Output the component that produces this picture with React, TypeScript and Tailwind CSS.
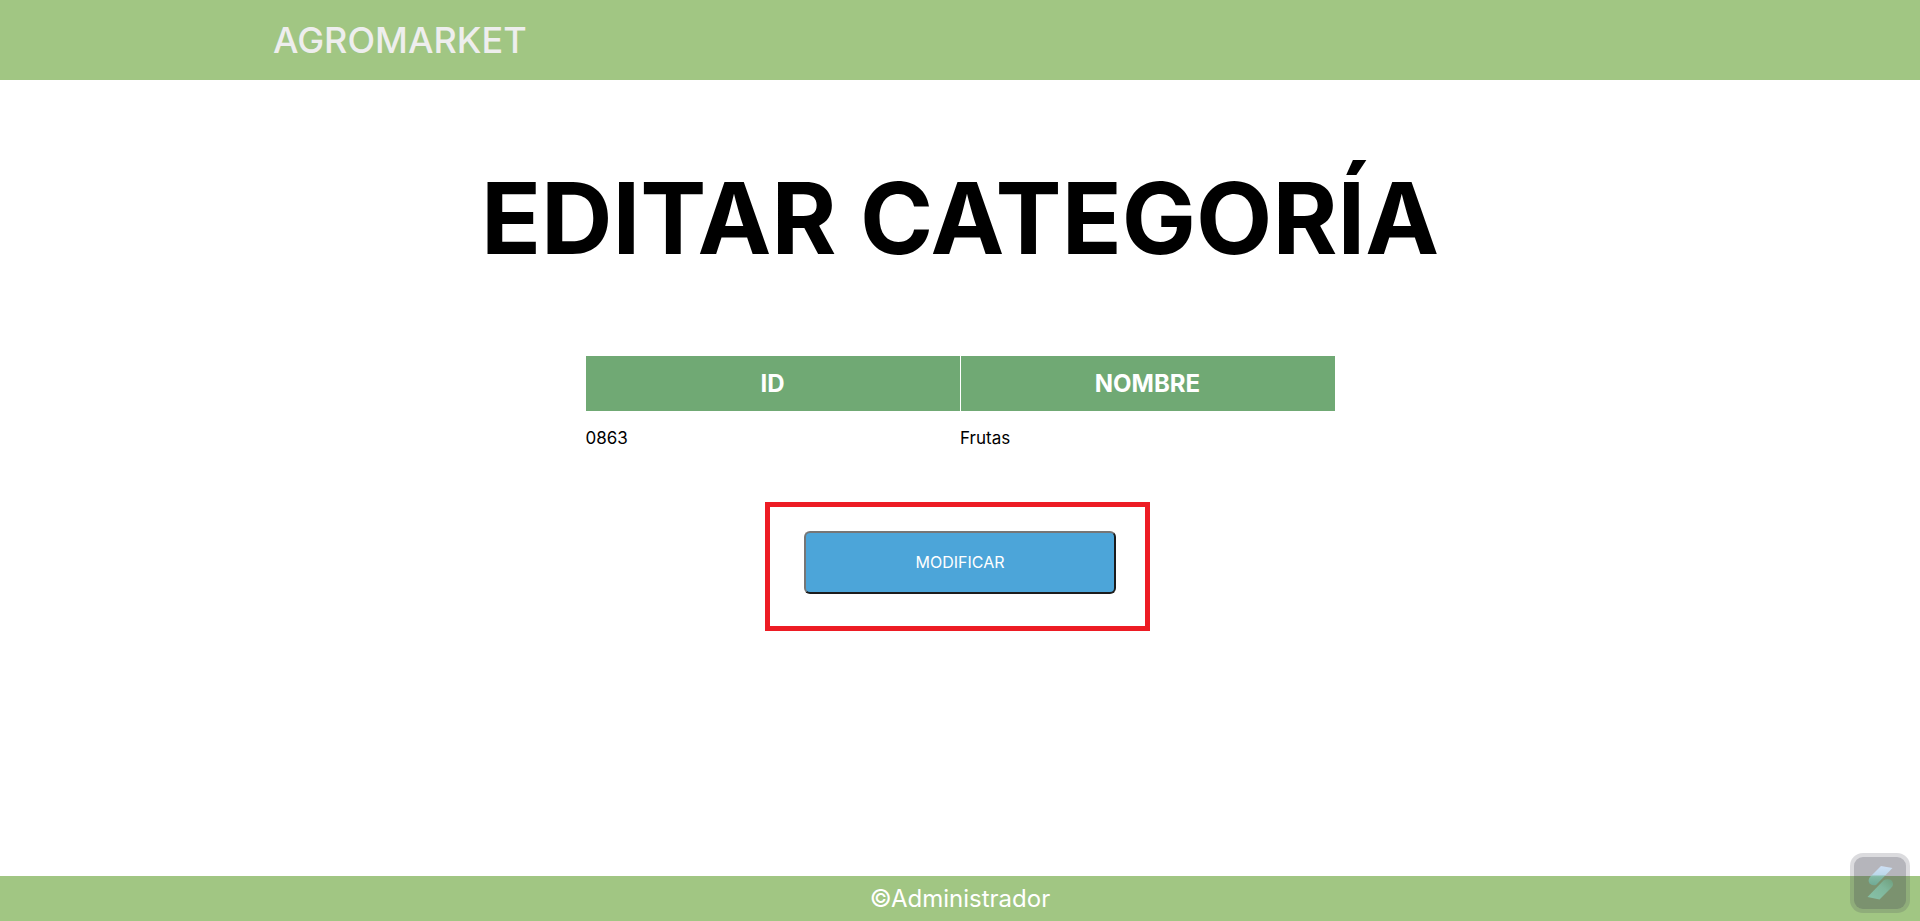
const categories = [{ id: "0863", name: "Frutas" }];

function BadgeLogo() {
  return (
    <svg viewBox="0 0 60 60" className="size-full" aria-hidden="true">
      <defs>
        <linearGradient id="badge-top" x1="0" y1="0" x2="0" y2="1">
          <stop offset="0" stopColor="#cfe0f5" />
          <stop offset="0.45" stopColor="#bcd8ea" />
          <stop offset="0.55" stopColor="#83b9a4" />
          <stop offset="1" stopColor="#6faa95" />
        </linearGradient>
        <linearGradient id="badge-bottom" x1="0" y1="1" x2="1" y2="0">
          <stop offset="0" stopColor="#87c2a8" />
          <stop offset="0.6" stopColor="#7fb69b" />
          <stop offset="1" stopColor="#6f9f7d" />
        </linearGradient>
      </defs>
      <rect width="60" height="60" rx="13" fill="#4b4b5c" fillOpacity="0.2" />
      <rect x="4" y="4" width="52" height="52" rx="9" fill="#3c3c4a" fillOpacity="0.24" />
      <path d="M31 13 L42.500 15 L26 32 Q22 33 19.500 30.500 Q17.500 27 20 24 Z" fill="url(#badge-top)" />
      <path d="M29.500 46.500 L17.500 44 L33.500 27.500 Q36 25.500 40 26.500 Q43.500 28.500 43 32 Q42.500 33.500 41 35 Z" fill="url(#badge-bottom)" />
    </svg>
  );
}

export default function App() {
  return (
    <div className="flex min-h-screen flex-col bg-white font-['Inter','Open_Sans',sans-serif] text-black">
      <header className="flex h-20 items-center bg-[#a1c683]">
        <div className="mx-auto w-full max-w-[1374px]">
          <a href="#" className="text-4xl font-medium text-[#eeeeee]">
            AGROMARKET
          </a>
        </div>
      </header>

      <main className="flex flex-1 flex-col items-center pt-16">
        <h1 className="text-center text-[99px] leading-[148px] font-bold">EDITAR CATEGORÍA</h1>

        <table className="mt-16 w-full max-w-[749px] table-fixed border-collapse">
          <thead>
            <tr className="h-[55px] bg-[#70a974] text-2xl text-white">
              <th scope="col" className="border-r border-white font-bold">ID</th>
              <th scope="col" className="font-bold">NOMBRE</th>
            </tr>
          </thead>
          <tbody>
            {categories.map((category) => (
              <tr key={category.id} className="h-14 text-[17px]">
                <td>{category.id}</td>
                <td>{category.name}</td>
              </tr>
            ))}
          </tbody>
        </table>

        <div className="relative mt-16 w-full max-w-[312px]">
          <button
            type="button"
            className="h-[63px] w-full rounded-md border-2 border-t-[#767676] border-r-[#1c1c1c] border-b-[#1c1c1c] border-l-[#767676] bg-[#4ca5d9] pb-0.5 text-base text-white"
          >
            MODIFICAR
          </button>
          <div className="pointer-events-none absolute -top-[29px] -right-[34px] -bottom-[37px] -left-[39px] border-5 border-[#ed1c24]" />
        </div>
      </main>

      <footer className="flex h-[45px] items-center justify-center bg-[#a1c683] text-2xl text-white">
        ©Administrador
      </footer>

      <button type="button" aria-label="Asistente" className="fixed right-[10px] bottom-2 size-15">
        <BadgeLogo />
      </button>
    </div>
  );
}
